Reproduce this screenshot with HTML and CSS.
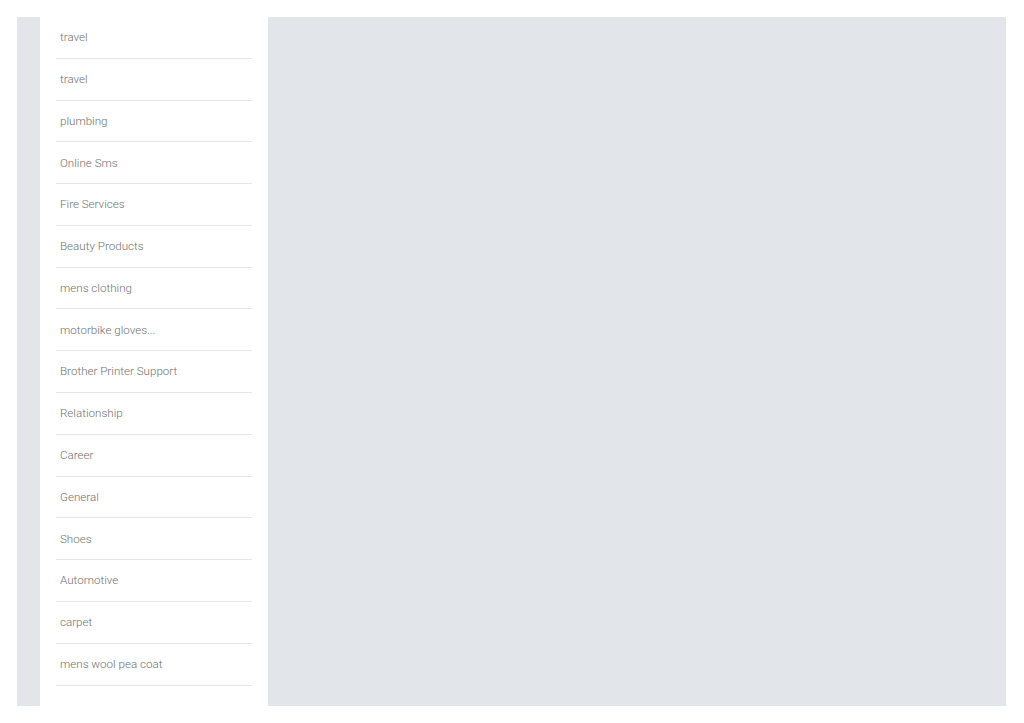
FILE: index.html
```html
<!DOCTYPE html>
<html lang="en">
  <head>
    <meta charset="UTF-8" />
    <meta name="viewport" content="width=device-width, initial-scale=1.0" />
    <title>Categories</title>
    <link rel="stylesheet" href="styles.css">
  </head>

  <body>
    <div class="page">
      <div class="rail"></div>
      <aside class="sidebar">
        <ul class="cat-list">
          <li>travel</li>
          <li>travel</li>
          <li>plumbing</li>
          <li>Online Sms</li>
          <li>Fire Services</li>
          <li>Beauty Products</li>
          <li>mens clothing</li>
          <li>motorbike gloves...</li>
          <li>Brother Printer Support</li>
          <li>Relationship</li>
          <li>Career</li>
          <li>General</li>
          <li>Shoes</li>
          <li>Automotive</li>
          <li>carpet</li>
          <li>mens wool pea coat</li>
        </ul>
      </aside>
      <main class="content"></main>
    </div>
  </body>
</html>
```

FILE: styles.css
```css
body {
  margin: 0;
  background-color: #ffffff;
  font-family: Roboto, "Liberation Sans", sans-serif;
}

.page {
  display: flex;
  margin: 17px 18px 17px 17px;
  height: 689px;
  background-color: #e2e5ea;
}

.rail {
  width: 23px;
}

.sidebar {
  width: 196px;
  padding: 0 16px;
  background-color: #ffffff;
}

.cat-list {
  list-style: none;
  margin: 0;
  padding: 0;
}

.cat-list li {
  padding: 11.2px 4px 11.6px;
  line-height: 18px;
  font-size: 11.6px;
  font-weight: 300;
  color: #707070;
  border-bottom: 1px solid #e6e6e6;
}

.content {
  flex: 1;
}
```
